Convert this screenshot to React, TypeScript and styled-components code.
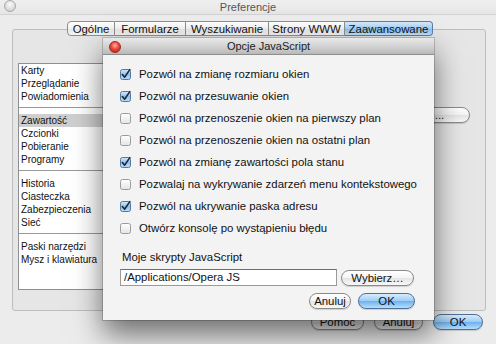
import React from "react";
import styled, { createGlobalStyle, css } from "styled-components";

const Global = createGlobalStyle`
  html, body { margin: 0; padding: 0; background: #ececec; }
  body { font-family: "Liberation Sans", Arial, sans-serif; -webkit-font-smoothing: antialiased; }
  * { box-sizing: border-box; }
`;

const Window = styled.div`
  position: relative;
  width: 496px;
  height: 344px;
  overflow: hidden;
  background: #ececec;
  display: flex;
  flex-direction: column;
  white-space: nowrap;
`;

const TitleBar = styled.div`
  height: 15px;
  flex: none;
  display: flex;
  align-items: center;
  justify-content: center;
  position: relative;
  background: linear-gradient(#efefef, #e6e6e6);
  border-bottom: 1px solid #d2d2d2;
  font-size: 11px;
  color: #555;
`;

const WinButton = styled.span<{ $red?: boolean }>`
  position: absolute;
  left: ${(p) => (p.$red ? "6px" : "4px")};
  top: ${(p) => (p.$red ? "3px" : "0px")};
  width: 12px;
  height: 12px;
  border-radius: 50%;
  ${(p) =>
    p.$red
      ? css`
          background: radial-gradient(circle at 50% 35%, #ffb0a8 0%, #f0453a 45%, #b81a12 100%);
          border: 1px solid #9a2a24;
        `
      : css`
          background: radial-gradient(circle at 50% 35%, #fafafa 0%, #dcdcdc 60%, #c8c8c8 100%);
          border: 1px solid #a8a8a8;
        `}
`;

const Body = styled.div`
  flex: 1;
  display: flex;
  flex-direction: column;
  padding: 6px 10px 0 12px;
  position: relative;
`;

const TabBar = styled.div`
  display: flex;
  justify-content: center;
  height: 15px;
  position: relative;
  z-index: 1;
  margin-bottom: -7px;
  padding-left: 2px;
`;

const Tab = styled.div<{ $active?: boolean; $w: number }>`
  width: ${(p) => p.$w}px;
  height: 15px;
  display: flex;
  align-items: center;
  justify-content: center;
  font-size: 11.4px;
  color: #111;
  border: 1px solid #8e8e8e;
  border-left: none;
  background: linear-gradient(#ffffff, #f3f3f3 50%, #e6e6e6 51%, #f4f4f4);
  &:first-child {
    border-left: 1px solid #8e8e8e;
    border-radius: 4px 0 0 4px;
  }
  &:last-child {
    border-radius: 0 4px 4px 0;
  }
  ${(p) =>
    p.$active &&
    css`
      background: linear-gradient(#d6ebfd, #a4cff6 50%, #82bdf2 51%, #bfe3ff);
      border-color: #5b7fa8;
    `}
`;

const Panel = styled.div`
  height: 282px;
  border: 1px solid #bdbdbd;
  border-radius: 3px;
  background: #e6e6e6;
  display: flex;
  padding: 33px 15px 20px 5px;
  gap: 20px;
`;

const SideList = styled.div`
  width: 110px;
  background: #fff;
  border: 1px solid #8f8f8f;
  display: flex;
  flex-direction: column;
  font-size: 10px;
  color: #111;
`;

const Group = styled.div<{ $first?: boolean; $last?: boolean }>`
  padding: ${(p) => (p.$first ? "0" : "6px")} 0 4px;
  border-bottom: ${(p) => (p.$last ? "none" : "1px solid #9a9a9a")};
`;

const Item = styled.div<{ $sel?: boolean }>`
  height: 13px;
  line-height: 13px;
  padding-left: 2px;
  background: ${(p) => (p.$sel ? "#cfcfcf" : "transparent")};
`;

const RightPane = styled.div`
  flex: 1;
  display: flex;
  flex-direction: column;
  align-items: flex-end;
  padding-top: 44px;
`;

const AquaButton = styled.button<{ $blue?: boolean; $w: number }>`
  width: ${(p) => p.$w}px;
  height: 16px;
  border-radius: 8px;
  font-family: "Liberation Sans", Arial, sans-serif;
  font-size: 11.4px;
  color: #111;
  padding: 0;
  display: flex;
  align-items: center;
  justify-content: center;
  white-space: nowrap;
  border: 1px solid #8a8a8a;
  background: linear-gradient(#ffffff, #f4f4f4 50%, #e4e4e4 51%, #f8f8f8);
  box-shadow: 0 1px 1px rgba(0, 0, 0, 0.15);
  ${(p) =>
    p.$blue &&
    css`
      border-color: #4f6f96;
      background: linear-gradient(#d8ecfd, #9ccbf5 50%, #6fb0ee 51%, #b4e0ff);
    `}
`;

const MainButtons = styled.div`
  display: flex;
  justify-content: flex-end;
  gap: 10px;
  padding: 3px 3px 0 0;
`;

const Dialog = styled.div`
  position: absolute;
  left: 103px;
  top: 38px;
  width: 331px;
  height: 282px;
  display: flex;
  flex-direction: column;
  background: #f3f3f3;
  box-shadow: 0 14px 28px rgba(0, 0, 0, 0.55), 0 0 0 1px rgba(0, 0, 0, 0.18);
  z-index: 5;
`;

const DialogTitle = styled.div`
  height: 17px;
  flex: none;
  position: relative;
  display: flex;
  align-items: center;
  justify-content: center;
  font-size: 11px;
  color: #222;
  background: linear-gradient(#e9e9e9, #cfcfcf 60%, #b8b8b8);
  border-bottom: 1px solid #8e8e8e;
`;

const DialogBody = styled.div`
  flex: 1;
  display: flex;
  flex-direction: column;
  padding: 8px 19px 0 17px;
  font-size: 11.4px;
  color: #111;
`;

const CheckRow = styled.label`
  height: 22px;
  display: flex;
  align-items: center;
  gap: 8px;
  white-space: nowrap;
`;

const BoxSvg = styled.svg`
  flex: none;
  width: 11px;
  height: 11px;
  overflow: visible;
`;

const SectionLabel = styled.div`
  margin: 11px 0 0 2px;
  height: 14px;
  line-height: 14px;
`;

const InputRow = styled.div`
  display: flex;
  align-items: center;
  gap: 4px;
  margin-top: 5px;
`;

const TextField = styled.div`
  width: 217px;
  height: 17px;
  background: #fff;
  border: 1px solid #9a9a9a;
  border-top-color: #6e6e6e;
  padding-left: 3px;
  line-height: 15px;
  font-size: 11.4px;
`;

const DialogButtons = styled.div`
  display: flex;
  justify-content: flex-end;
  gap: 7px;
  margin-top: 7px;
`;

const Check: React.FC<{ on: boolean }> = ({ on }) => (
  <BoxSvg viewBox="0 0 11 11">
    <defs>
      <linearGradient id="cbOff" x1="0" y1="0" x2="0" y2="1">
        <stop offset="0" stopColor="#ffffff" />
        <stop offset="1" stopColor="#e4e4e4" />
      </linearGradient>
      <linearGradient id="cbOn" x1="0" y1="0" x2="0" y2="1">
        <stop offset="0" stopColor="#d7ebfc" />
        <stop offset="0.5" stopColor="#8fc2ef" />
        <stop offset="1" stopColor="#b9defb" />
      </linearGradient>
    </defs>
    <rect x="0.5" y="0.5" width="10" height="10" rx="2" fill={on ? "url(#cbOn)" : "url(#cbOff)"} stroke={on ? "#5a7799" : "#9b9b9b"} />
    {on && <path d="M2.4 5.6 L4.6 8.2 L9.8 0.6" fill="none" stroke="#1c2a3a" strokeWidth="1.6" strokeLinecap="round" strokeLinejoin="round" />}
  </BoxSvg>
);

const options: [string, boolean][] = [
  ["Pozwól na zmianę rozmiaru okien", true],
  ["Pozwól na przesuwanie okien", true],
  ["Pozwól na przenoszenie okien na pierwszy plan", false],
  ["Pozwól na przenoszenie okien na ostatni plan", false],
  ["Pozwól na zmianę zawartości pola stanu", true],
  ["Pozwalaj na wykrywanie zdarzeń menu kontekstowego", false],
  ["Pozwól na ukrywanie paska adresu", true],
  ["Otwórz konsolę po wystąpieniu błędu", false],
];

const groups: string[][] = [
  ["Karty", "Przeglądanie", "Powiadomienia"],
  ["Zawartość", "Czcionki", "Pobieranie", "Programy"],
  ["Historia", "Ciasteczka", "Zabezpieczenia", "Sieć"],
  ["Paski narzędzi", "Mysz i klawiatura"],
];

const tabs: [string, number, boolean][] = [
  ["Ogólne", 48, false],
  ["Formularze", 71, false],
  ["Wyszukiwanie", 83, false],
  ["Strony WWW", 76, false],
  ["Zaawansowane", 88, true],
];

export default function App() {
  return (
    <Window>
      <Global />
      <TitleBar>
        <WinButton />
        Preferencje
      </TitleBar>
      <Body>
        <TabBar>
          {tabs.map(([t, w, a]) => (
            <Tab key={t} $w={w} $active={a}>
              {t}
            </Tab>
          ))}
        </TabBar>
        <Panel>
          <SideList>
            {groups.map((g, gi) => (
              <Group key={gi} $first={gi === 0} $last={gi === groups.length - 1}>
                {g.map((it) => (
                  <Item key={it} $sel={it === "Zawartość"}>
                    {it}
                  </Item>
                ))}
              </Group>
            ))}
          </SideList>
          <RightPane>
            <AquaButton $w={61}>...</AquaButton>
          </RightPane>
        </Panel>
        <MainButtons>
          <AquaButton $w={53}>Pomoc</AquaButton>
          <AquaButton $w={49}>Anuluj</AquaButton>
          <AquaButton $w={50} $blue>
            OK
          </AquaButton>
        </MainButtons>
      </Body>
      <Dialog>
        <DialogTitle>
          <WinButton $red />
          Opcje JavaScript
        </DialogTitle>
        <DialogBody>
          {options.map(([t, on]) => (
            <CheckRow key={t}>
              <Check on={on} />
              {t}
            </CheckRow>
          ))}
          <SectionLabel>Moje skrypty JavaScript</SectionLabel>
          <InputRow>
            <TextField>/Applications/Opera JS</TextField>
            <AquaButton $w={73}>Wybierz…</AquaButton>
          </InputRow>
          <DialogButtons>
            <AquaButton $w={42}>Anuluj</AquaButton>
            <AquaButton $w={57} $blue>
              OK
            </AquaButton>
          </DialogButtons>
        </DialogBody>
      </Dialog>
    </Window>
  );
}
